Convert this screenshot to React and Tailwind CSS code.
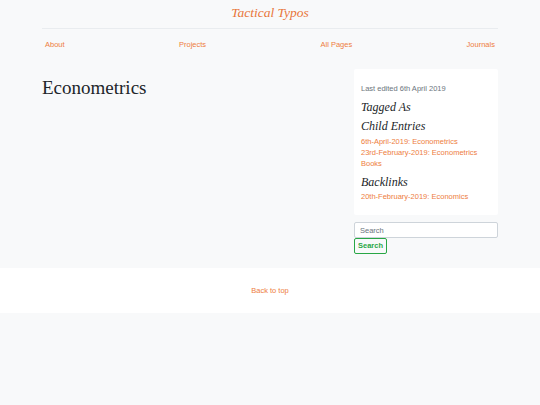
import React from 'react';

const serif = { fontFamily: '"Liberation Serif", Georgia, serif' };

export default function App() {
  const nav = ['About', 'Projects', 'All Pages', 'Journals'];

  return (
    <div className="min-h-[405px] bg-[#f8f9fa] text-[#212529]" style={{ fontFamily: '"Liberation Sans", Arial, sans-serif' }}>
      {/* Header */}
      <div className="mx-auto w-[456px]">
        <div className="pt-[2px] pb-[5px] text-center leading-[20px]">
          <a className="text-[13.5px] italic text-[#e8763a]" style={serif}>Tactical Typos</a>
        </div>
        <div className="border-t border-[#e9ecef]" />
        <nav className="flex justify-between px-[3px] pt-[10px] text-[7.5px] leading-[11px] text-[#ee7d3e]">
          {nav.map((item) => (
            <a key={item}>{item}</a>
          ))}
        </nav>
      </div>

      {/* Content */}
      <div className="mx-auto mt-[19px] flex w-[456px] justify-between">
        <div className="pt-[9px]">
          <h1 className="text-[19px] leading-none text-[#212529]" style={serif}>Econometrics</h1>
        </div>

        <div className="w-[144px]">
          <div className="rounded-[2px] bg-white px-[7px] pt-[14px] pb-[13px]">
            <p className="text-[7.5px] leading-[11px] text-[#6c757d]">Last edited 6th April 2019</p>
            <h4 className="mt-[7px] text-[12px] italic leading-none" style={serif}>Tagged As</h4>
            <h4 className="mt-[7px] text-[12px] italic leading-none" style={serif}>Child Entries</h4>
            <div className="mt-[4px] flex flex-col text-[7.5px] leading-[11px] text-[#ee7d3e]">
              <a>6th-April-2019: Econometrics</a>
              <a>23rd-February-2019: Econometrics</a>
              <a>Books</a>
            </div>
            <h4 className="mt-[7px] text-[12px] italic leading-none" style={serif}>Backlinks</h4>
            <div className="mt-[3px] text-[7.5px] leading-[11px] text-[#ee7d3e]">
              <a>20th-February-2019: Economics</a>
            </div>
          </div>

          <div className="mt-[7px] flex flex-col items-start">
            <input
              placeholder="Search"
              className="block h-[16px] w-full rounded-[2px] border border-[#ced4da] bg-white px-[5px] text-[7.5px] text-[#495057] placeholder-[#6c757d] outline-none"
            />
            <button className="block h-[16px] rounded-[2px] border border-[#28a745] bg-transparent px-[3px] text-[7.5px] font-bold leading-none text-[#28a745]">
              Search
            </button>
          </div>
        </div>
      </div>

      {/* Footer */}
      <footer className="mt-[14px] flex h-[45px] items-center justify-center bg-white">
        <a className="text-[7.5px] text-[#ee7d3e]">Back to top</a>
      </footer>
    </div>
  );
}
